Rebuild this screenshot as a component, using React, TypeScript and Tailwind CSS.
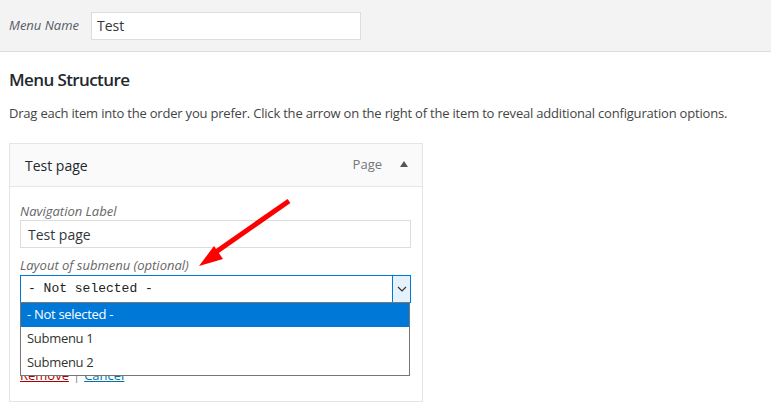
import React from "react";

export default function App() {
  const sans = { fontFamily: '"Open Sans", "Noto Sans", sans-serif' };
  return (
    <div
      className="relative w-[771px] h-[416px] overflow-hidden bg-white text-[#23282d]"
      style={sans}
    >
      <div className="h-[52px] bg-[#f3f3f3] border-b border-[#dddddd] flex items-center pl-[9px]">
        <span className="italic text-[13px] text-[#555d66]">Menu Name</span>
        <div className="ml-[12px] w-[270px] h-[28px] border border-[#dddddd] bg-white flex items-center px-[5px] text-[14px] text-[#32373c]">
          Test
        </div>
      </div>

      <div className="px-[9px]">
        <h3 className="mt-[16px] text-[17px] font-semibold leading-[24px] tracking-[-0.6px]">
          Menu Structure
        </h3>
        <p className="mt-[11px] text-[13px] leading-[20px] text-[#444] tracking-[-0.2px]">
          Drag each item into the order you prefer. Click the arrow on the right of the item to reveal additional configuration options.
        </p>

        <div className="mt-[20px] w-[414px] h-[259px] border border-[#e5e5e5] bg-white">
          <div className="h-[43px] bg-[#fafafa] border-b border-[#e5e5e5] flex items-center pl-[15px] pr-[13px]">
            <span className="text-[14px] font-medium">Test page</span>
            <span className="ml-auto text-[13px] text-[#72777c] mr-[3px]">Page</span>
            <svg width="10" height="8" viewBox="0 0 10 8" className="ml-[14px] mb-[3px]">
              <polygon points="1,7 5,1 9,7" fill="#555" />
            </svg>
          </div>
          <div className="relative pl-[10px] pr-[11px] pt-[15px]">
            <div className="italic text-[13px] text-[#666] leading-[18px]">Navigation Label</div>
            <div className="h-[28px] border border-[#dddddd] flex items-center px-[7px] text-[14px] text-[#32373c]">
              Test page
            </div>
            <div className="mt-[8px] italic text-[13px] text-[#666] leading-[18px]">
              Layout of submenu (optional)
            </div>
            <div className="mt-[1px] h-[28px] border border-[#0078d7] flex items-center pl-[7px] text-[#222]">
              <span style={{ fontFamily: '"Liberation Mono", monospace' }} className="text-[13px]">
                - Not selected -
              </span>
              <div className="ml-auto h-full w-[18px] bg-[#e5f1fb] border-l border-[#0078d7] flex items-center justify-center">
                <svg width="10" height="6" viewBox="0 0 10 6">
                  <polyline points="1,1 5,5 9,1" fill="none" stroke="#333" strokeWidth="1.2" />
                </svg>
              </div>
            </div>
            <div className="mt-[62px] text-[13px] leading-[20px]">
              <span className="text-[#a00] underline">Remove</span>
              <span className="text-[#7e8993] mx-[4px]">|</span>
              <span className="text-[#0073aa] underline">Cancel</span>
            </div>

            <div className="absolute left-[10px] top-[115px] w-[390px] h-[74px] border border-[#767676] bg-white text-[13px] tracking-[-0.3px]">
              <div className="h-[24px] bg-[#0078d7] text-white flex items-center pl-[6px]">- Not selected -</div>
              <div className="h-[24px] text-[#333] flex items-center pl-[6px]">Submenu 1</div>
              <div className="h-[24px] text-[#333] flex items-center pl-[6px]">Submenu 2</div>
            </div>
          </div>
        </div>
      </div>

      <svg className="absolute left-0 top-0 pointer-events-none" width="771" height="416">
        <line x1="289" y1="201" x2="213" y2="254" stroke="#ff0000" strokeWidth="5" />
        <polygon points="199,266 214,246 223,259" fill="#ff0000" />
      </svg>
    </div>
  );
}
